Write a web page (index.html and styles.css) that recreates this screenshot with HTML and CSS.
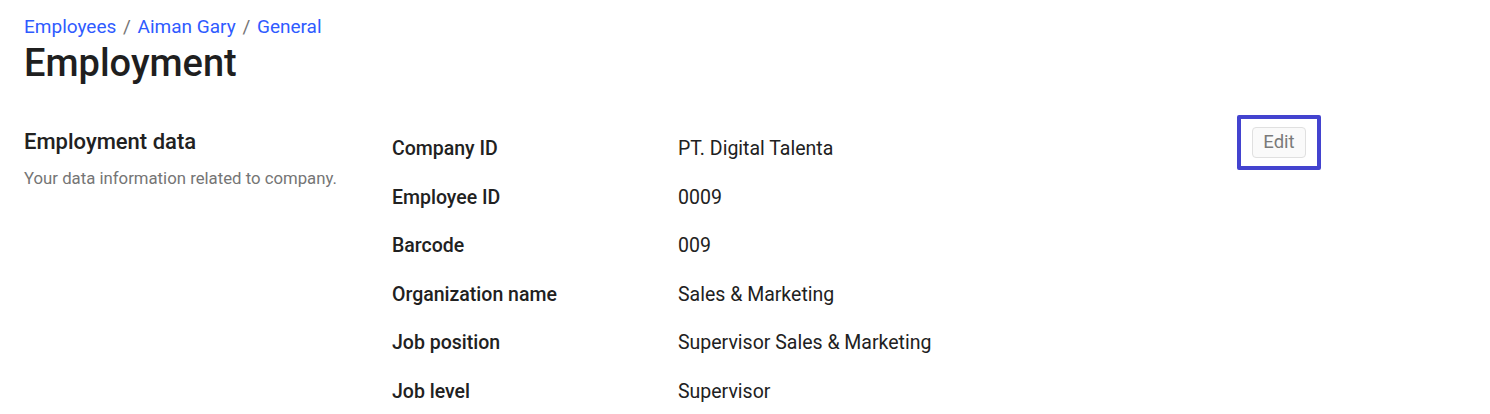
FILE: index.html
```html
<!DOCTYPE html>
<html lang="en">
<head>
  <meta charset="UTF-8">
  <title>Employment</title>
  <link rel="stylesheet" href="styles.css">
</head>
<body>

  <div class="page">
    <nav class="breadcrumb">
      <a href="#">Employees</a> <span class="sep">/</span>
      <a href="#">Aiman Gary</a> <span class="sep">/</span>
      <a href="#">General</a>
    </nav>
    <h1>Employment</h1>

    <section class="section">
      <div class="section-info">
        <h2>Employment data</h2>
        <p>Your data information related to company.</p>
      </div>

      <div class="data-list">
        <div class="row"><div class="label">Company ID</div><div class="value">PT. Digital Talenta</div></div>
        <div class="row"><div class="label">Employee ID</div><div class="value">0009</div></div>
        <div class="row"><div class="label">Barcode</div><div class="value">009</div></div>
        <div class="row"><div class="label">Organization name</div><div class="value">Sales &amp; Marketing</div></div>
        <div class="row"><div class="label">Job position</div><div class="value">Supervisor Sales &amp; Marketing</div></div>
        <div class="row"><div class="label">Job level</div><div class="value">Supervisor</div></div>
      </div>

      <div class="actions">
        <div class="focus-ring">
          <button class="edit-btn">Edit</button>
        </div>
      </div>
    </section>
  </div>

</body>
</html>
```

FILE: styles.css
```css
body {
  margin: 0;
  font-family: Roboto, "Liberation Sans", sans-serif;
  background: #fff;
  color: #212121;
}
.page {
  padding: 14px 24px 0 24px;
}
.breadcrumb {
  font-size: 19px;
  line-height: 26px;
  color: #757575;
}
.breadcrumb a {
  color: #2f5bff;
  text-decoration: none;
}
.breadcrumb .sep {
  margin: 0 2px;
}
h1 {
  font-size: 38px;
  font-weight: 500;
  line-height: 46px;
  margin: 0;
  color: #1f1f1f;
}
.section {
  display: flex;
  margin-top: 42px;
}
.section-info {
  width: 368px;
  flex-shrink: 0;
}
.section-info h2 {
  font-size: 22px;
  font-weight: 500;
  line-height: 28px;
  margin: 0;
}
.section-info p {
  font-size: 16.75px;
  color: #757575;
  margin: 11px 0 0 0;
  line-height: 22px;
}
.data-list {
  width: 845px;
  padding-top: 8px;
}
.row {
  display: flex;
  height: 48.6px;
  font-size: 19.5px;
  line-height: 26px;
}
.label {
  width: 286px;
  font-weight: 500;
}
.value {
  color: #212121;
}
.focus-ring {
  width: 76px;
  height: 47px;
  border: 4px solid #4343cf;
  border-radius: 2px;
  display: flex;
  align-items: center;
  justify-content: center;
  margin-top: -13px;
}
.edit-btn {
  font-family: Roboto, "Liberation Sans", sans-serif;
  font-size: 18.5px;
  color: #7a7a7a;
  background: #fafafa;
  border: 1px solid #e0e0e0;
  border-radius: 4px;
  padding: 3px 10px;
  line-height: 23px;
}
```
